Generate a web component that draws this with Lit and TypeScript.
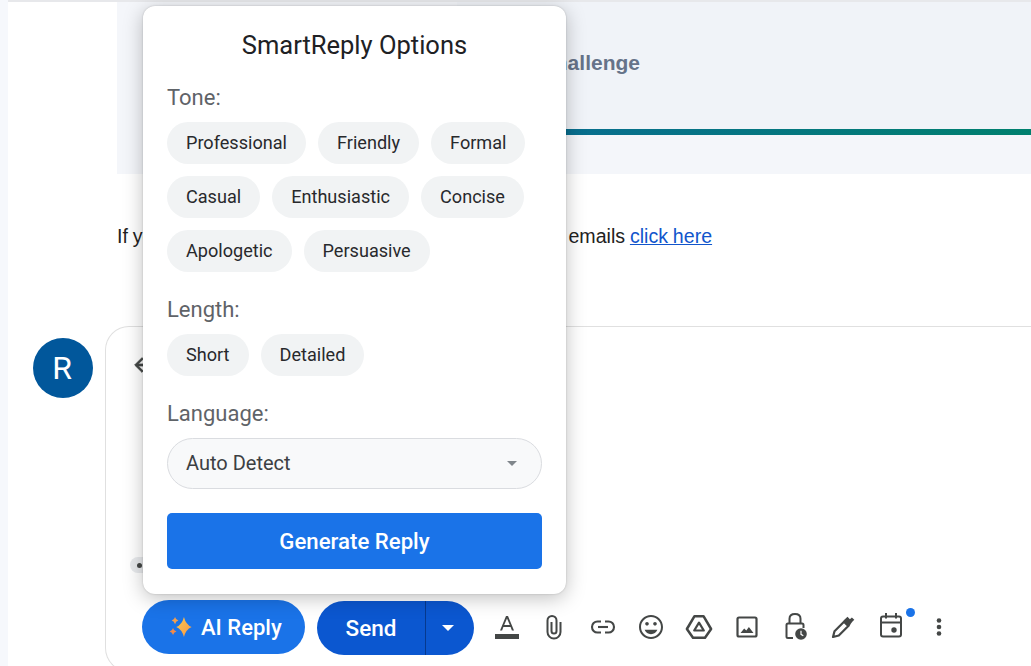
import { LitElement, html, css, svg } from "lit";
import { customElement } from "lit/decorators.js";

const TONES = ["Professional", "Friendly", "Formal", "Casual", "Enthusiastic", "Concise", "Apologetic", "Persuasive"];
const LENGTHS = ["Short", "Detailed"];

const ICONS = [
  svg`<path d="M0 19h24v5H0z"/><path d="M11 1 5 15.5h2.1l1.3-3.4h7.2l1.3 3.4H19L13 1h-2zM9.2 10 12 3.4 14.8 10H9.2z"/>`,
  svg`<path fill="none" stroke="currentColor" stroke-width="2" transform="translate(-1 0)" d="M18.5 7v10a6.5 6.5 0 0 1-13 0V5.5a4.5 4.5 0 0 1 9 0V16a2.5 2.5 0 0 1-5 0V7"/>`,
  svg`<g fill="none" stroke="currentColor" stroke-width="2.1"><path d="M10 6.5H6.5a5.5 5.5 0 0 0 0 11H10"/><path d="M14 6.5h3.5a5.5 5.5 0 0 1 0 11H14"/><path d="M7 12h10"/></g>`,
  svg`<path d="M11.99 0C5.36 0 0 5.37 0 12s5.36 12 11.99 12C18.62 24 24 18.63 24 12S18.62 0 11.99 0zM12 22C6.48 22 2 17.52 2 12S6.48 2 12 2s10 4.48 10 10-4.48 10-10 10zm4-11.5c1 0 1.8-.8 1.8-1.8S17 6.9 16 6.9s-1.8.8-1.8 1.8.8 1.8 1.8 1.8zm-8 0c1 0 1.8-.8 1.8-1.8S9 6.9 8 6.9s-1.8.8-1.8 1.8.8 1.8 1.8 1.8zm4 8.7c2.9 0 5.4-1.8 6.4-4.4H5.6c1 2.6 3.5 4.4 6.4 4.4z"/>`,
  svg`<g fill="none" stroke="currentColor" stroke-linejoin="round"><path stroke-width="2.5" d="M7.5 1.2h9l7.6 12.8-6.1 8.8H6L-.1 14z"/><path stroke-width="2.2" d="M12 7.6l4.8 7.9H7.2z"/></g>`,
  svg`<rect x="2.5" y="2.5" width="19" height="19" rx="1.5" fill="none" stroke="currentColor" stroke-width="2.2"/><path d="M5.5 18l3.7-4.6 2.1 2.2 2.6-3.6 4.6 6z"/>`,
  svg`<g fill="none" stroke="currentColor" stroke-width="2"><path d="M6.5 8V3.7C6.5.3 9-1 12-1s5.5 1.3 5.5 4.7V8"/><path d="M10 23H5a1.5 1.5 0 0 1-1.5-1.500V10A1.5 1.5 0 0 1 5 8.5h14a1.5 1.5 0 0 1 1.5 1.5v3"/></g><circle cx="18" cy="19" r="5.8"/><path d="M18 15.800v3.500l2.300 1.500" fill="none" stroke="#fff" stroke-width="1.2"/>`,
  svg`<path fill="none" stroke="currentColor" stroke-width="2.2" stroke-linejoin="round" d="M2 22l1.5-5.800L13 6.700l4.300 4.300-9.500 9.500z"/><path d="M12.500 5.500 16.500 1.800l2.400 2.400 2-1.800 2.400 2.400-2 2-1.500 2-1.500 2.700z"/>`,
  svg`<g fill="none" stroke="currentColor" stroke-width="2"><rect x="2" y="1.5" width="20" height="20" rx="2"/><path d="M2 7.5h20"/><path d="M7 -2v5.500M17 -2v5.500"/></g><circle cx="15" cy="15" r="2.7"/>`,
  svg`<circle cx="12" cy="5.5" r="2.3"/><circle cx="12" cy="12" r="2.3"/><circle cx="12" cy="18.5" r="2.3"/>`,
];

@customElement("app-root")
export class AppRoot extends LitElement {
  static styles = css`
    :host {
      display: block;
      position: relative;
      width: 1031px;
      height: 666px;
      overflow: hidden;
      background: #f6f8fc;
      font-family: "Liberation Sans", Arial, sans-serif;
    }
    .main {
      margin-left: 8px;
      height: 666px;
      box-sizing: border-box;
      background: #fff;
      border-top: 2px solid #e7e8eb;
      overflow: hidden;
    }
    .banner {
      margin-left: 109px;
      height: 172px;
      background: #f4f6fa;
    }
    .banner-inner {
      margin-left: 340px;
    }
    .banner-top {
      height: 127px;
      background: #f0f3f8;
      display: flex;
      align-items: center;
      padding-left: 4.8px;
      padding-bottom: 6px;
      box-sizing: border-box;
      font-weight: 700;
      font-size: 21px;
      color: #667389;
      white-space: nowrap;
    }
    .bar {
      height: 6px;
      background: linear-gradient(90deg, #0a6a96 0%, #00806e 100%);
    }
    .note {
      margin: 50px 0 0 109px;
      font-size: 19.6px;
      word-spacing: -0.6px;
      line-height: 24px;
      color: #222;
      white-space: nowrap;
    }
    .note a {
      color: #1155cc;
      text-decoration: underline;
    }
    .thread {
      display: flex;
      margin-top: 78px;
      padding-left: 25px;
    }
    .avatar {
      width: 60px;
      height: 60px;
      margin-top: 12px;
      padding-right: 2px;
      border-radius: 50%;
      box-sizing: border-box;
      background: #01579b;
      color: #fff;
      font-family: Roboto, sans-serif;
      font-size: 32px;
      display: flex;
      align-items: center;
      justify-content: center;
      flex: none;
    }
    .card {
      margin-left: 12px;
      flex: 1;
      height: 346px;
      border: 1px solid #e0e0e0;
      border-right: none;
      border-radius: 24px 0 0 24px;
      display: flex;
      flex-direction: column;
      box-sizing: border-box;
      padding: 0 0 0 36px;
    }
    .back {
      margin: 27px 0 0 -11px;
      height: 22px;
      color: #444746;
    }
    .back svg {
      width: 22px;
      height: 22px;
      display: block;
      fill: currentColor;
      stroke: currentColor;
      stroke-width: 1;
    }
    .trim {
      margin: 181px 0 0 -12px;
      width: 26px;
      height: 16px;
      border-radius: 8px;
      background: #e8eaed;
      display: flex;
      align-items: center;
      padding-left: 7px;
      box-sizing: border-box;
    }
    .trim i {
      width: 5px;
      height: 5px;
      border-radius: 50%;
      background: #444746;
    }
    .toolbar {
      margin-top: 26px;
      display: flex;
      align-items: center;
      font-family: Roboto, sans-serif;
    }
    .ai {
      width: 163px;
      height: 54px;
      border-radius: 27px;
      background: #1a73e8;
      color: #fff;
      font-size: 22px;
      font-weight: 500;
      display: flex;
      align-items: center;
      padding-left: 27px;
      gap: 9px;
      box-sizing: border-box;
    }
    .ai svg {
      width: 23px;
      height: 23px;
      flex: none;
    }
    .send {
      margin: 2px 0 0 12px;
      width: 157px;
      height: 54px;
      border-radius: 27px;
      background: #0b57d0;
      color: #fff;
      display: flex;
      overflow: hidden;
    }
    .send-label {
      width: 109px;
      border-right: 1px solid #06398f;
      display: flex;
      align-items: center;
      justify-content: center;
      font-size: 22.5px;
      font-weight: 500;
      box-sizing: border-box;
    }
    .send-drop {
      flex: 1;
      display: flex;
      align-items: center;
      justify-content: center;
      padding-right: 5px;
    }
    .send-drop i {
      border-left: 6px solid transparent;
      border-right: 6px solid transparent;
      border-top: 6px solid #fff;
    }
    .icons {
      margin: 0 0 0 9px;
      display: flex;
      color: #444746;
    }
    .icon {
      width: 48px;
      height: 28px;
      display: flex;
      align-items: center;
      justify-content: center;
      position: relative;
    }
    .icon svg {
      width: 24px;
      height: 24px;
      fill: currentColor;
      overflow: visible;
      display: block;
    }
    .dot {
      position: absolute;
      top: -5px;
      right: 0;
      width: 9px;
      height: 9px;
      border-radius: 50%;
      background: #1a73e8;
    }
    .popup {
      position: absolute;
      left: 143px;
      top: 6px;
      width: 423px;
      height: 588px;
      box-sizing: border-box;
      padding: 24px 24px 25px;
      background: #fff;
      border-radius: 12px;
      box-shadow: 0 4px 20px rgba(0, 0, 0, 0.25), 0 0 2px rgba(0, 0, 0, 0.2);
      font-family: Roboto, sans-serif;
    }
    h2 {
      margin: 0;
      font-size: 25.5px;
      font-weight: 400;
      line-height: 30px;
      text-align: center;
      color: #202124;
    }
    .section {
      margin-top: 26px;
    }
    .label {
      font-size: 22px;
      line-height: 24px;
      color: #5f6368;
      margin-bottom: 12px;
    }
    .chips {
      display: flex;
      flex-wrap: wrap;
      gap: 12px;
    }
    .chip {
      height: 42px;
      padding: 0 19px 2px;
      box-sizing: border-box;
      border-radius: 21px;
      background: #f1f3f4;
      color: #28292c;
      font-size: 18.1px;
      display: flex;
      align-items: center;
    }
    .select {
      height: 51px;
      box-sizing: border-box;
      border: 1px solid #dadce0;
      border-radius: 26px;
      background: #f8f9fa;
      padding: 0 24px 2px 18px;
      display: flex;
      align-items: center;
      justify-content: space-between;
      font-size: 20px;
      color: #3c4043;
    }
    .select i {
      border-left: 5px solid transparent;
      border-right: 5px solid transparent;
      border-top: 5px solid #80868b;
      margin-top: 2px;
    }
    .generate {
      margin-top: 24px;
      height: 56px;
      border-radius: 5px;
      background: #1a73e8;
      color: #fff;
      font-size: 22.2px;
      font-weight: 500;
      display: flex;
      align-items: center;
      justify-content: center;
    }
  `;

  render() {
    return html`
      <div class="main">
        <div class="banner">
          <div class="banner-inner">
            <div class="banner-top">Weekly Challenge</div>
            <div class="bar"></div>
          </div>
        </div>
        <div class="note">
          If you no longer wish to receive these weekly coding emails
          <a>click here</a>
        </div>
        <div class="thread">
          <div class="avatar">R</div>
          <div class="card">
            <div class="back">
              <svg viewBox="0 0 24 24"><path d="M20 11H7.83l5.59-5.59L12 4l-8 8 8 8 1.41-1.41L7.83 13H20v-2z" /></svg>
            </div>
            <div class="trim"><i></i></div>
            <div class="toolbar">
              <div class="ai">
                <svg viewBox="0 0 24 24">
                  <defs>
                    <linearGradient id="sp" x1="0" y1="0" x2="1" y2="1">
                      <stop offset="0" stop-color="#ffc94d" />
                      <stop offset="1" stop-color="#f5964a" />
                    </linearGradient>
                  </defs>
                  <path fill="url(#sp)" d="M15.600 1Q17.600 9 23.600 11.500 17.600 14 15.600 22 13.600 14 7.600 11.500 13.600 9 15.600 1z" />
                  <path fill="#f6a04d" d="M6.300 1Q7 4 9.800 4.800 7 5.600 6.300 8.600 5.600 5.600 2.800 4.800 5.600 4 6.300 1z" />
                  <path fill="#f08a4b" d="M4.200 12.600Q4.900 15.500 7.800 16.200 4.900 16.900 4.200 19.800 3.500 16.900.6 16.200 3.500 15.500 4.200 12.600z" />
                </svg>
                AI Reply
              </div>
              <div class="send">
                <div class="send-label">Send</div>
                <div class="send-drop"><i></i></div>
              </div>
              <div class="icons">
                ${ICONS.map(
                  (p, i) => html`<div class="icon">
                    <svg viewBox="0 0 24 24">${p}</svg>
                    ${i === 8 ? html`<span class="dot"></span>` : ""}
                  </div>`
                )}
              </div>
            </div>
          </div>
        </div>
      </div>
      <div class="popup">
        <h2>SmartReply Options</h2>
        <div class="section">
          <div class="label">Tone:</div>
          <div class="chips">${TONES.map((t) => html`<div class="chip">${t}</div>`)}</div>
        </div>
        <div class="section">
          <div class="label">Length:</div>
          <div class="chips">${LENGTHS.map((t) => html`<div class="chip">${t}</div>`)}</div>
        </div>
        <div class="section">
          <div class="label">Language:</div>
          <div class="select"><span>Auto Detect</span><i></i></div>
        </div>
        <div class="generate">Generate Reply</div>
      </div>
    `;
  }
}
